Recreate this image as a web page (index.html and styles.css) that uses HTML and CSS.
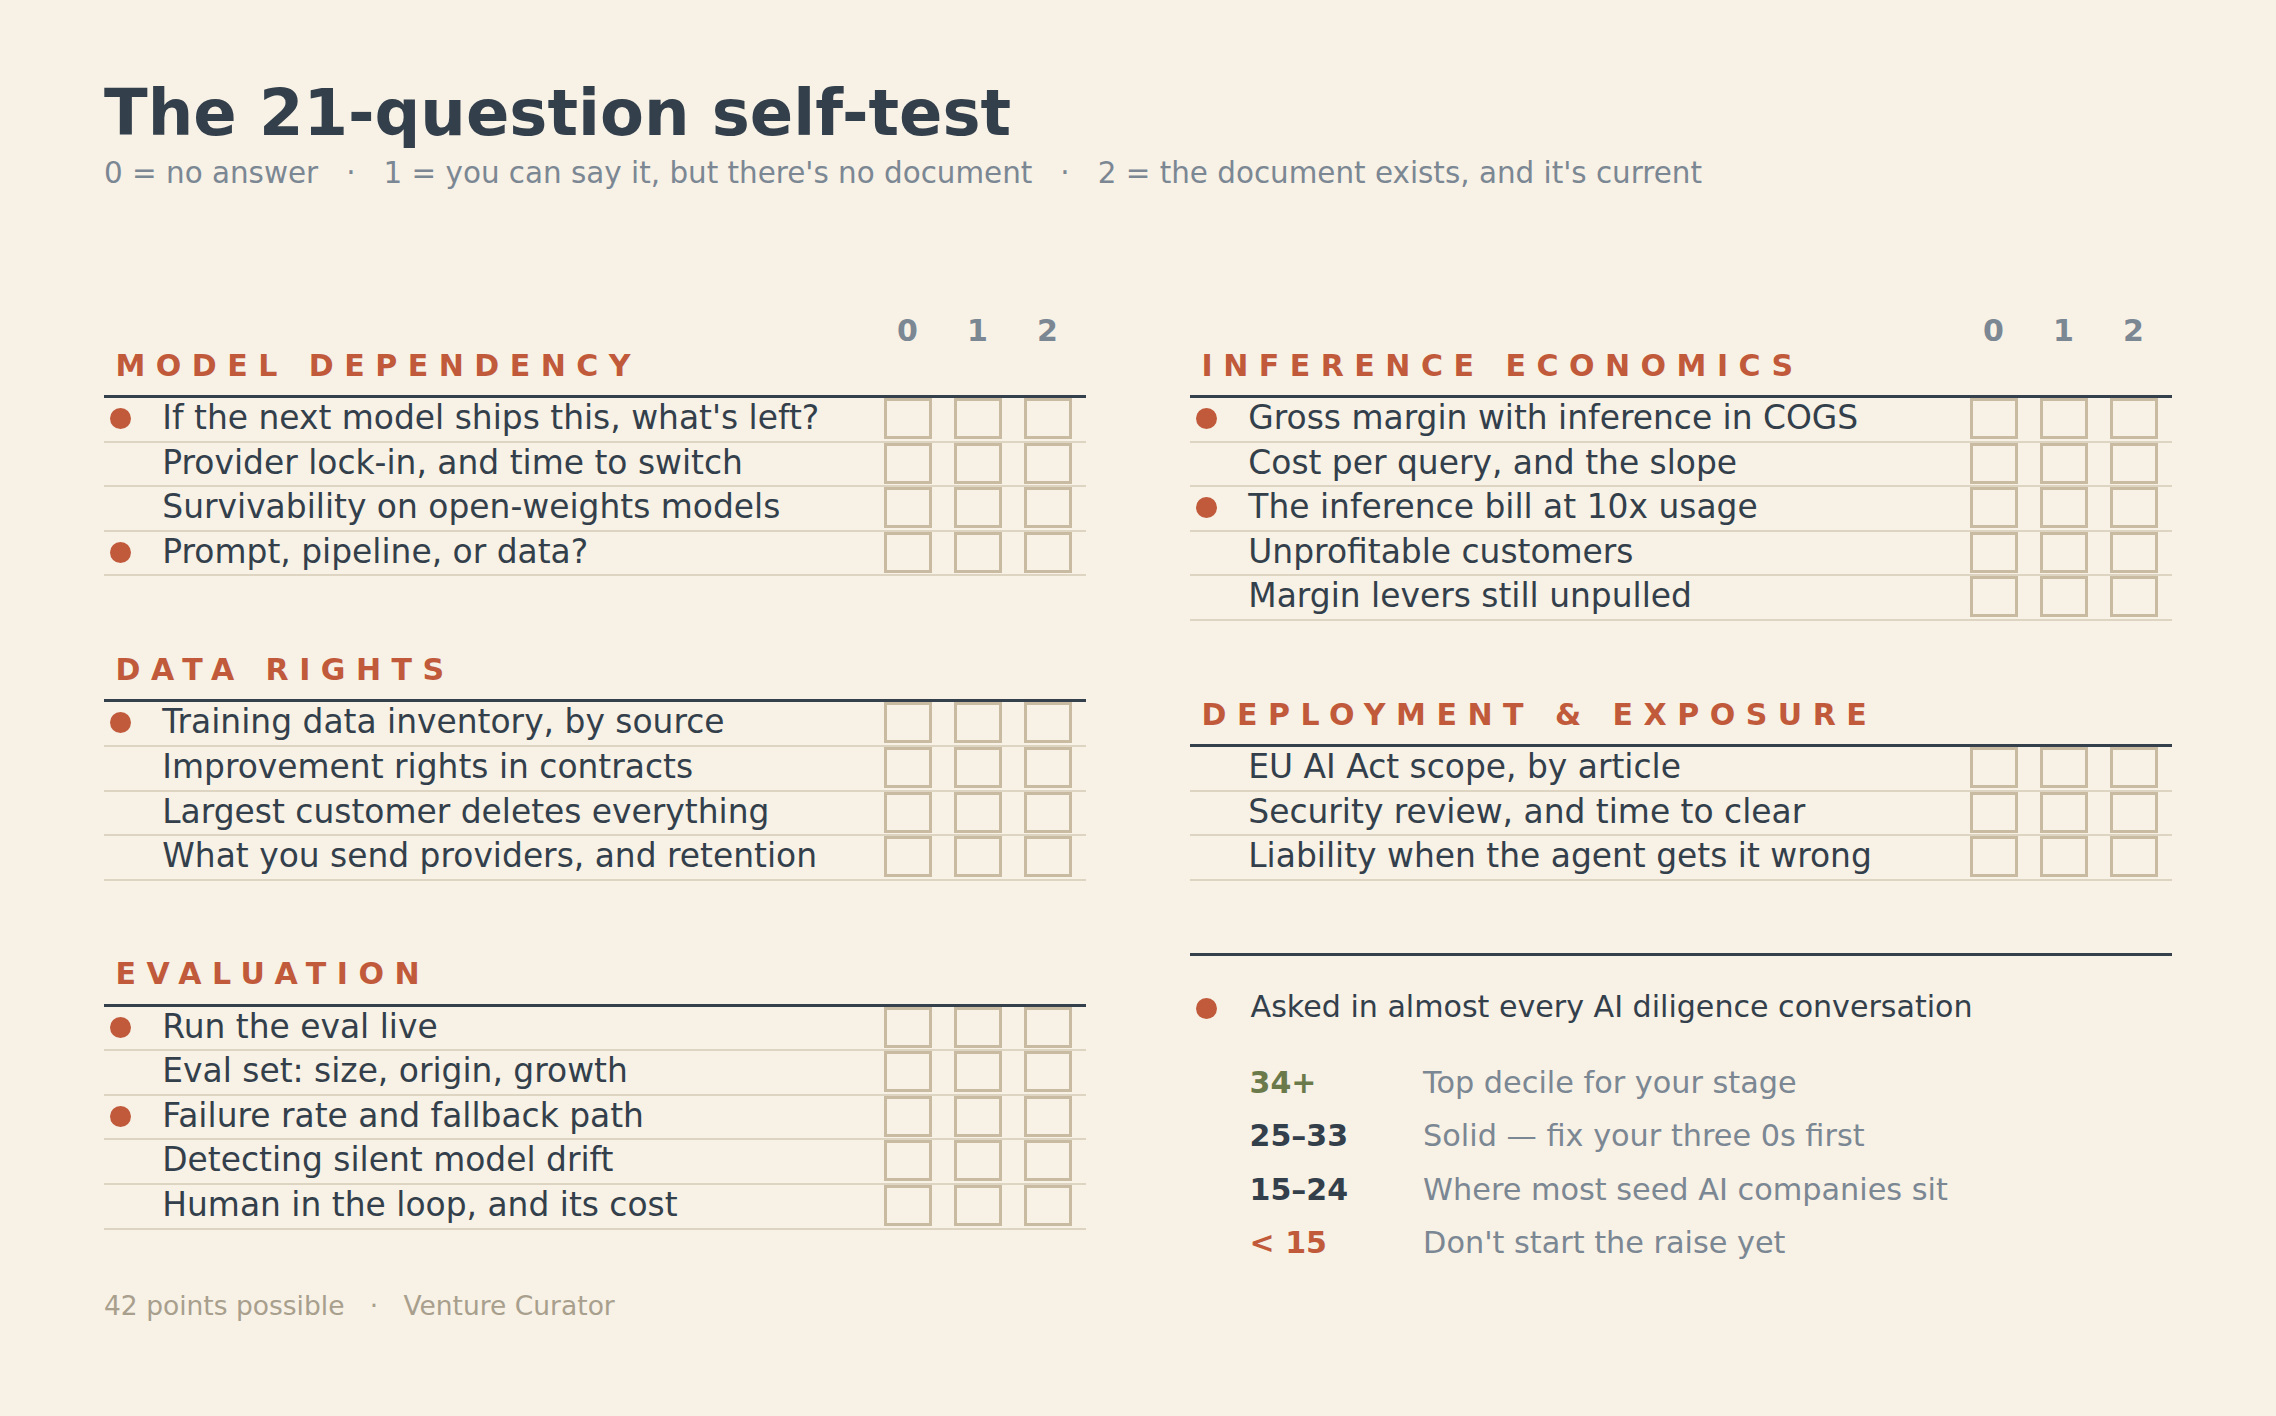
FILE: index.html
```html
<!DOCTYPE html>
<html lang="en">
<head>
<meta charset="utf-8">
<title>The 21-question self-test</title>
<link rel="stylesheet" href="styles.css">
</head>
<body>
<main class="page">
  <h1 class="title">The 21-question self-test</h1>
  <p class="subtitle">0 = no answer   ·   1 = you can say it, but there's no document   ·   2 = the document exists, and it's current</p>

  <div class="columns">
    <div class="column">
      <div class="scale-labels"><span>0</span><span>1</span><span>2</span></div>

      <section class="section">
        <h2 class="section-title">MODEL DEPENDENCY</h2>
        <div class="row"><span class="marker"><span class="dot"></span></span><span class="question">If the next model ships this, what's left?</span><span class="boxes"><span class="box"></span><span class="box"></span><span class="box"></span></span></div>
        <div class="row"><span class="marker"></span><span class="question">Provider lock-in, and time to switch</span><span class="boxes"><span class="box"></span><span class="box"></span><span class="box"></span></span></div>
        <div class="row"><span class="marker"></span><span class="question">Survivability on open-weights models</span><span class="boxes"><span class="box"></span><span class="box"></span><span class="box"></span></span></div>
        <div class="row"><span class="marker"><span class="dot"></span></span><span class="question">Prompt, pipeline, or data?</span><span class="boxes"><span class="box"></span><span class="box"></span><span class="box"></span></span></div>
      </section>

      <section class="section">
        <h2 class="section-title">DATA RIGHTS</h2>
        <div class="row"><span class="marker"><span class="dot"></span></span><span class="question">Training data inventory, by source</span><span class="boxes"><span class="box"></span><span class="box"></span><span class="box"></span></span></div>
        <div class="row"><span class="marker"></span><span class="question">Improvement rights in contracts</span><span class="boxes"><span class="box"></span><span class="box"></span><span class="box"></span></span></div>
        <div class="row"><span class="marker"></span><span class="question">Largest customer deletes everything</span><span class="boxes"><span class="box"></span><span class="box"></span><span class="box"></span></span></div>
        <div class="row"><span class="marker"></span><span class="question">What you send providers, and retention</span><span class="boxes"><span class="box"></span><span class="box"></span><span class="box"></span></span></div>
      </section>

      <section class="section">
        <h2 class="section-title">EVALUATION</h2>
        <div class="row"><span class="marker"><span class="dot"></span></span><span class="question">Run the eval live</span><span class="boxes"><span class="box"></span><span class="box"></span><span class="box"></span></span></div>
        <div class="row"><span class="marker"></span><span class="question">Eval set: size, origin, growth</span><span class="boxes"><span class="box"></span><span class="box"></span><span class="box"></span></span></div>
        <div class="row"><span class="marker"><span class="dot"></span></span><span class="question">Failure rate and fallback path</span><span class="boxes"><span class="box"></span><span class="box"></span><span class="box"></span></span></div>
        <div class="row"><span class="marker"></span><span class="question">Detecting silent model drift</span><span class="boxes"><span class="box"></span><span class="box"></span><span class="box"></span></span></div>
        <div class="row"><span class="marker"></span><span class="question">Human in the loop, and its cost</span><span class="boxes"><span class="box"></span><span class="box"></span><span class="box"></span></span></div>
      </section>

      <p class="footer">42 points possible   ·   Venture Curator</p>
    </div>

    <div class="column">
      <div class="scale-labels"><span>0</span><span>1</span><span>2</span></div>

      <section class="section">
        <h2 class="section-title">INFERENCE ECONOMICS</h2>
        <div class="row"><span class="marker"><span class="dot"></span></span><span class="question">Gross margin with inference in COGS</span><span class="boxes"><span class="box"></span><span class="box"></span><span class="box"></span></span></div>
        <div class="row"><span class="marker"></span><span class="question">Cost per query, and the slope</span><span class="boxes"><span class="box"></span><span class="box"></span><span class="box"></span></span></div>
        <div class="row"><span class="marker"><span class="dot"></span></span><span class="question">The inference bill at 10x usage</span><span class="boxes"><span class="box"></span><span class="box"></span><span class="box"></span></span></div>
        <div class="row"><span class="marker"></span><span class="question">Unprofitable customers</span><span class="boxes"><span class="box"></span><span class="box"></span><span class="box"></span></span></div>
        <div class="row"><span class="marker"></span><span class="question">Margin levers still unpulled</span><span class="boxes"><span class="box"></span><span class="box"></span><span class="box"></span></span></div>
      </section>

      <section class="section">
        <h2 class="section-title">DEPLOYMENT &amp; EXPOSURE</h2>
        <div class="row"><span class="marker"></span><span class="question">EU AI Act scope, by article</span><span class="boxes"><span class="box"></span><span class="box"></span><span class="box"></span></span></div>
        <div class="row"><span class="marker"></span><span class="question">Security review, and time to clear</span><span class="boxes"><span class="box"></span><span class="box"></span><span class="box"></span></span></div>
        <div class="row"><span class="marker"></span><span class="question">Liability when the agent gets it wrong</span><span class="boxes"><span class="box"></span><span class="box"></span><span class="box"></span></span></div>
      </section>

      <div class="key">
        <div class="note"><span class="note-marker"><span class="dot"></span></span><span class="note-text">Asked in almost every AI diligence conversation</span></div>
        <div class="legend">
          <span class="score score-top">34+</span><span class="meaning">Top decile for your stage</span>
          <span class="score">25–33</span><span class="meaning">Solid — fix your three 0s first</span>
          <span class="score">15–24</span><span class="meaning">Where most seed AI companies sit</span>
          <span class="score score-low">&lt; 15</span><span class="meaning">Don't start the raise yet</span>
        </div>
      </div>
    </div>
  </div>
</main>
</body>
</html>
```

FILE: styles.css
```css
* {
  box-sizing: border-box;
}

html,
body {
  margin: 0;
  padding: 0;
}

body {
  background: #f7f1e6;
  color: #333f4b;
  font-family: "DejaVu Sans", Verdana, sans-serif;
  min-height: 1416px;
}

.page {
  padding: 75.6px 104px 0 104px;
}

.title {
  margin: 0;
  font-size: 64px;
  font-weight: bold;
  line-height: normal;
  color: #333f4b;
}

.subtitle {
  margin: 6px 0 0;
  font-size: 29.4px;
  line-height: normal;
  color: #7b8793;
  white-space: pre;
}

.columns {
  display: grid;
  grid-template-columns: 982px 982px;
  column-gap: 104px;
  margin-top: 123.3px;
  align-items: start;
}

.scale-labels {
  display: flex;
  justify-content: flex-end;
  gap: 22px;
  padding-right: 14.5px;
}

.scale-labels span {
  width: 48px;
  text-align: center;
  font-size: 30px;
  font-weight: bold;
  line-height: normal;
  color: #7b8793;
}

.section + .section {
  margin-top: 75.7px;
}

.section-title {
  margin: 0;
  padding: 0 0 12.2px 11.5px;
  font-size: 30px;
  font-weight: bold;
  line-height: normal;
  letter-spacing: 10.5px;
  color: #c05a3a;
  border-bottom: 3px solid #34404c;
}

.row {
  display: flex;
  align-items: flex-start;
  height: 44.6px;
  border-bottom: 2px solid #ded4c2;
}

.marker {
  flex: none;
  width: 58.3px;
  padding: 10px 0 0 5.5px;
}

.dot {
  display: block;
  width: 21px;
  height: 21px;
  border-radius: 50%;
  background: #c05a3a;
}

.question {
  flex: 1;
  font-size: 32.9px;
  line-height: normal;
  white-space: nowrap;
  color: #333f4b;
}

.boxes {
  flex: none;
  display: flex;
  gap: 22px;
  margin-right: 14.5px;
}

.box {
  display: block;
  width: 48px;
  height: 41px;
  border: 3px solid #c9bba2;
}

.footer {
  margin: 60.5px 0 0;
  font-size: 26.5px;
  line-height: normal;
  color: #a89f8d;
  white-space: pre;
}

.key {
  margin-top: 72.5px;
  border-top: 3px solid #34404c;
  padding-top: 33px;
}

.note {
  display: flex;
  align-items: flex-start;
}

.note-marker {
  flex: none;
  width: 60.6px;
  padding: 8.3px 0 0 6px;
}

.note-text {
  font-size: 30.1px;
  line-height: normal;
  color: #333f4b;
}

.legend {
  display: grid;
  grid-template-columns: 173.5px auto;
  justify-content: start;
  margin-top: 31.5px;
  padding-left: 59.6px;
  font-size: 30px;
  line-height: 53.6px;
}

.score {
  font-weight: bold;
  color: #333f4b;
}

.score-top {
  color: #6b7a4b;
}

.score-low {
  color: #c05a3a;
}

.meaning {
  font-size: 30.3px;
  color: #7b8793;
}
```
